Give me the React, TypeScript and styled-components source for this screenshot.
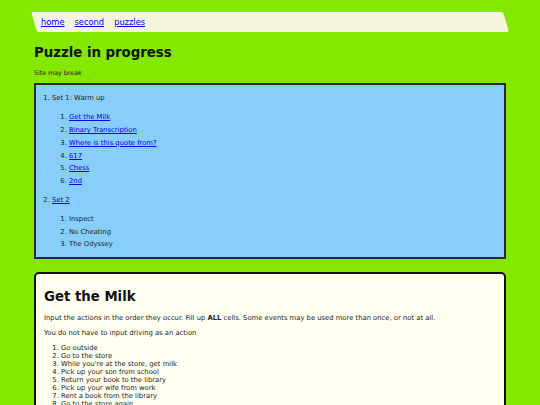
import styled, { createGlobalStyle } from "styled-components";

const GlobalStyle = createGlobalStyle`
  html, body {
    margin: 0;
    padding: 0;
    background-color: #84e800;
  }

  body {
    font-family: "DejaVu Sans", Verdana, sans-serif;
    font-size: 6.8px;
    color: #222;
  }

  a {
    color: #0000ee;
  }
`;

const Page = styled.div`
  padding: 12px 34px 0;
`;

const Nav = styled.nav`
  position: relative;
  height: 19.5px;
  display: flex;
  align-items: center;
  gap: 10px;
  padding: 0 7px;
  font-size: 8.3px;

  &::before {
    content: "";
    position: absolute;
    inset: 0;
    background-color: #f5f5dc;
    border-radius: 2px;
    transform: skewX(16deg);
    z-index: 0;
  }

  a {
    position: relative;
    z-index: 1;
  }
`;

const Title = styled.h1`
  margin: 13.5px 0 9.4px;
  font-size: 13.3px;
  font-weight: bold;
  color: #111;
`;

const Note = styled.p`
  margin: 0 0 6.6px;
  font-size: 6.3px;
`;

const SetBox = styled.div`
  background-color: #87cefa;
  border: 2px solid #2a2a2a;
  line-height: 12.7px;

  & > ol {
    margin: 7.5px 0 6px;
    padding-left: 16px;
  }

  ol ol {
    margin: 6.3px 0;
    padding-left: 17px;
  }
`;

const PuzzleCard = styled.section`
  margin-top: 13px;
  background-color: #fffff0;
  border: 2px solid #111;
  border-radius: 5px;
  padding: 14.7px 8px 12px;
`;

const CardTitle = styled.h2`
  margin: 0 0 9.5px;
  font-size: 13.3px;
  font-weight: bold;
  color: #111;
`;

const Para = styled.p`
  margin: 0 0 7px;
`;

const Steps = styled.ol`
  margin: 0;
  padding-left: 17px;
  line-height: 8px;
`;

const setOne = [
  "Get the Milk",
  "Binary Transcription",
  "Where is this quote from?",
  "617",
  "Chess",
  "2nd",
];

const setTwo = ["Inspect", "No Cheating", "The Odyssey"];

const steps = [
  "Go outside",
  "Go to the store",
  "While you're at the store, get milk",
  "Pick up your son from school",
  "Return your book to the library",
  "Pick up your wife from work",
  "Rent a book from the library",
  "Go to the store again",
  "Go home",
];

export default function App() {
  return (
    <>
      <GlobalStyle />
      <Page>
        <Nav>
          <a href="#">home</a>
          <a href="#">second</a>
          <a href="#">puzzles</a>
        </Nav>
        <Title>Puzzle in progress</Title>
        <Note>Site may break</Note>
        <SetBox>
          <ol>
            <li>
              Set 1: Warm up
              <ol>
                {setOne.map((name) => (
                  <li key={name}>
                    <a href="#">{name}</a>
                  </li>
                ))}
              </ol>
            </li>
            <li>
              <a href="#">Set 2</a>
              <ol>
                {setTwo.map((name) => (
                  <li key={name}>{name}</li>
                ))}
              </ol>
            </li>
          </ol>
        </SetBox>
        <PuzzleCard>
          <CardTitle>Get the Milk</CardTitle>
          <Para>
            Input the actions in the order they occur. Fill up <b>ALL</b> cells.
            Some events may be used more than once, or not at all.
          </Para>
          <Para>You do not have to input driving as an action</Para>
          <Steps>
            {steps.map((s) => (
              <li key={s}>{s}</li>
            ))}
          </Steps>
        </PuzzleCard>
      </Page>
    </>
  );
}
